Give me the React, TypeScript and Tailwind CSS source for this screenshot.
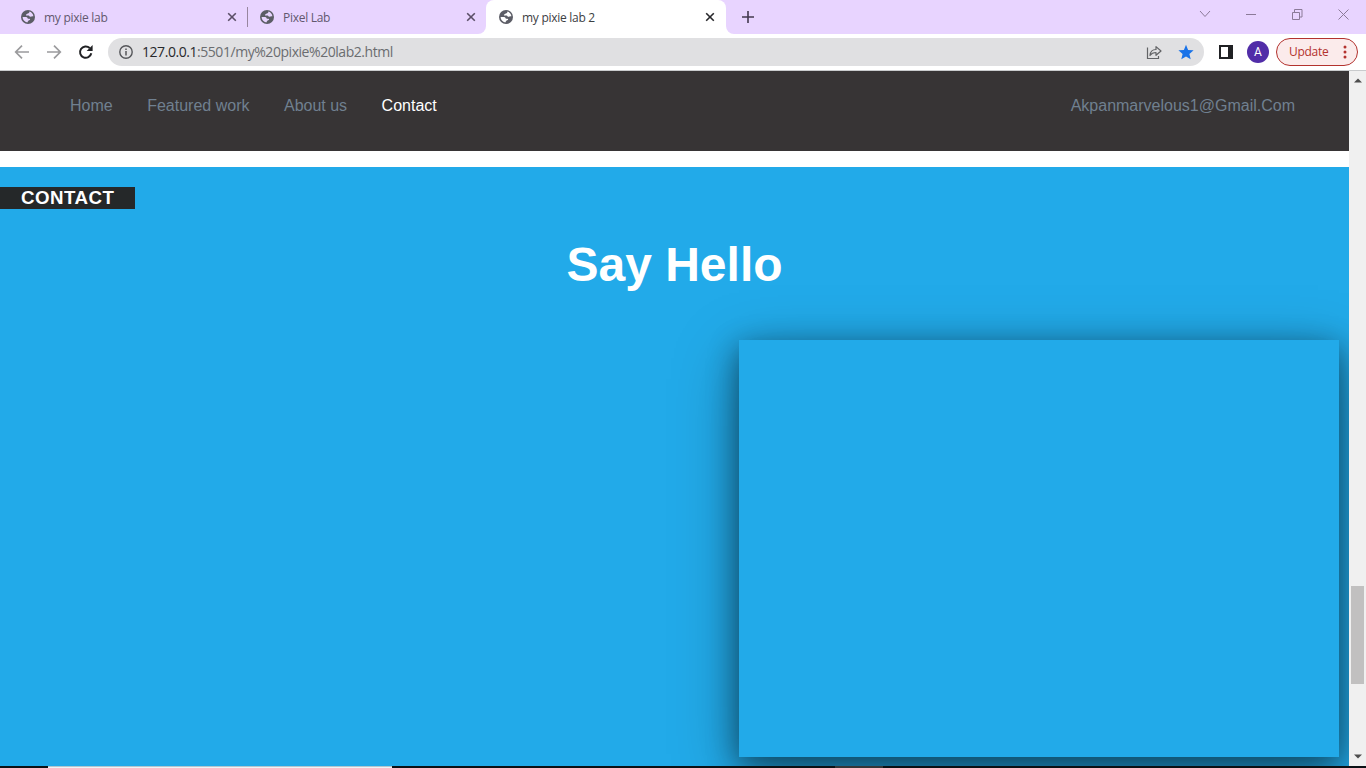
import React from "react";

const uiFont = "font-['Open_Sans','Noto_Sans',sans-serif]";

function Globe({ className = "" }: { className?: string }) {
  return (
    <svg viewBox="0 0 14 14" className={`h-[14px] w-[14px] shrink-0 ${className}`}>
      <circle cx="7" cy="7" r="7" fill="#5c5d66" />
      <path
        d="M8.300 1.600C8.600 2.800 7.900 3.400 6.800 3.400 5.900 3.400 5.900 4.300 5.200 4.500 4.700 4.700 4.900 5.600 5.600 5.600H7.700C8.400 5.600 8.300 6.600 9.100 6.700 10.300 6.800 11 6.300 12.400 6.300 12.100 3.900 10.500 2.100 8.300 1.600z"
        className="fill-current"
      />
      <path
        d="M1.600 7H4.300C5.800 7 6.800 7.700 6.800 8.700H8.400C9.500 8.700 9.300 10.200 8.100 10.300 7.200 10.400 7.300 11.200 6.300 12.400 3.600 12 1.600 9.800 1.600 7z"
        className="fill-current"
      />
    </svg>
  );
}

function Cross({ color }: { color: string }) {
  return (
    <svg viewBox="0 0 10 10" className="h-[10px] w-[10px] shrink-0" stroke={color} strokeWidth="1.600">
      <path d="M1.200 1.200l7.600 7.600M8.800 1.200L1.200 8.800" />
    </svg>
  );
}

function Tab({ title, active = false }: { title: string; active?: boolean }) {
  return (
    <div className={`flex h-[34px] items-center pl-[13px] ${active ? "w-[240px] rounded-t-lg bg-white pr-[11px] text-[#3c4043]" : "w-[239px] pr-[10px] text-[#62586e]"}`}>
      <Globe className={active ? "text-white" : "text-[#e8d4ff]"} />
      <span className="ml-[9px] flex-1 whitespace-nowrap pt-px text-[12px] leading-[16px] tracking-[-0.280px]">{title}</span>
      <Cross color={active ? "#27272b" : "#5a4e66"} />
    </div>
  );
}

function TabStrip() {
  return (
    <div className="flex h-[34px] bg-[#e8d4ff]">
      <div className="flex w-[247px] pl-[8px]">
        <Tab title="my pixie lab" />
      </div>
      <div className="flex h-[34px] w-[239px] items-center bg-white">
        <div className="flex h-[34px] w-[239px] items-center rounded-br-lg bg-[#e8d4ff]">
          <div className="h-[20px] w-px shrink-0 bg-[#98869f]" />
          <div className="-ml-px">
            <Tab title="Pixel Lab" />
          </div>
        </div>
      </div>
      <div className="w-[240px] bg-[#e8d4ff]">
        <Tab title="my pixie lab 2" active />
      </div>
      <div className="flex-1 bg-white">
        <div className="flex h-[34px] items-center justify-between rounded-bl-lg bg-[#e8d4ff] pl-[16px] pr-[17px]">
          <svg viewBox="0 0 12 12" className="h-[12px] w-[12px]" stroke="#43384f" strokeWidth="1.600">
            <path d="M6 0v12M0 6h12" />
          </svg>
          <svg viewBox="0 0 150 12" className="-mt-[6px] h-[12px] w-[150px]" fill="none" stroke="#8b7a98" strokeWidth="1">
            <path d="M1 3l5 5.500L11 3M47 6.500h10M93.500 4.500h7v7h-7zM95.500 4.500v-3h7.500v7.500h-2.500M139.500 1.500l10 10M149.500 1.500l-10 10" />
          </svg>
        </div>
      </div>
    </div>
  );
}

function Toolbar() {
  return (
    <div className="flex h-[37px] items-center border-b border-[#c9cbcd] bg-white pl-[14px] pr-[8px]">
      <svg viewBox="0 0 80 16" className="h-[16px] w-[80px] shrink-0" fill="none" strokeWidth="1.700">
        <g stroke="#9b9b9d">
          <path d="M15 8H2M8 1.700L1.700 8 8 14.300" />
          <path d="M33 8h13M40 1.700L46.300 8 40 14.300" />
        </g>
        <path d="M77.300 9.300A5.700 5.700 0 1 1 75.700 4" stroke="#202124" strokeWidth="2" />
        <path d="M78.600 1v6h-6z" fill="#202124" />
      </svg>
      <div className="ml-[14px] flex h-[28px] w-[1096px] shrink-0 items-center rounded-full bg-[#e0e0e2] pl-[11px] pr-[10px]">
        <svg viewBox="0 0 14 14" className="h-[14px] w-[14px]" fill="none" stroke="#55565a">
          <circle cx="7" cy="7" r="6.200" strokeWidth="1.400" />
          <path d="M7 6v4.500M7 3.400v1.600" strokeWidth="1.500" />
        </svg>
        <span className="ml-[9px] flex-1 whitespace-nowrap text-[14px] leading-[20px] tracking-[-0.450px] text-[#6b6d70]">
          <span className="text-[#27282b]">127.0.0.1</span>:5501/my%20pixie%20lab2.html
        </span>
        <svg viewBox="0 0 16 16" className="h-[16px] w-[16px]" fill="none" stroke="#626366" strokeWidth="1.200">
          <path d="M1.500 3.500v11h11V12" />
          <path d="M4 11.500c.3-4 2.500-6 6-6V2.600L15 7l-5 4.300V8.500c-3 0-4.500.8-6 3z" strokeLinejoin="round" />
        </svg>
        <svg viewBox="0 0 16 16" className="ml-[16px] h-[16px] w-[16px]">
          <path d="M8 .8l2.100 5.100 5.500.4-4.200 3.600 1.300 5.400L8 12.400l-4.700 2.900 1.300-5.400L.4 6.300l5.500-.4z" fill="#1a73e8" />
        </svg>
      </div>
      <svg viewBox="0 0 14 14" className="ml-[15px] h-[14px] w-[14px] shrink-0">
        <path d="M0 0h14v14H0zM2 2v10h7V2z" fill="#202124" fillRule="evenodd" />
      </svg>
      <div className="ml-[14px] flex h-[22px] w-[22px] shrink-0 items-center justify-center rounded-full bg-[#512da8] font-['Roboto',sans-serif] text-[12px] text-white">A</div>
      <div className="ml-[7px] flex h-[28px] w-[82px] shrink-0 items-center rounded-full border border-[#b3322e] bg-[#fbebeb] pl-[12px] pr-[10px] text-[#b3322e]">
        <span className="flex-1 text-[12px] leading-[16px] tracking-[-0.280px]">Update</span>
        <svg viewBox="0 0 4 14" className="h-[14px] w-[4px]" fill="#b3322e">
          <circle cx="2" cy="2" r="1.500" />
          <circle cx="2" cy="7" r="1.500" />
          <circle cx="2" cy="12" r="1.500" />
        </svg>
      </div>
    </div>
  );
}

function Scrollbar() {
  return (
    <div className="flex w-[17px] flex-col items-center bg-[#f0f0f0]">
      <svg viewBox="0 0 8 5" className="mt-[7px] h-[5px] w-[8px]">
        <path d="M0 4.500L4 .5l4 4z" fill="#4d4d4d" />
      </svg>
      <div className="mt-[503px] h-[98px] w-[13px] bg-[#c1c0c0]" />
      <svg viewBox="0 0 8 5" className="mt-[70px] h-[5px] w-[8px]">
        <path d="M0 .5h8l-4 4z" fill="#4d4d4d" />
      </svg>
    </div>
  );
}

export default function App() {
  return (
    <div className="flex h-[768px] w-[1366px] flex-col overflow-hidden bg-white">
      <header className={uiFont}>
        <TabStrip />
        <Toolbar />
      </header>
      <div className="flex h-[695px] shrink-0">
        <main className="flex w-[1349px] flex-col overflow-hidden font-['Liberation_Sans',Arial,sans-serif]">
          <nav className="flex h-[80px] shrink-0 justify-between bg-[#373435] pl-[70px] pr-[54px] pt-[26px] text-[16px] leading-[18px] text-[#708090]">
            <div className="flex gap-[34.500px]">
              <a>Home</a>
              <a>Featured work</a>
              <a>About us</a>
              <a className="text-white">Contact</a>
            </div>
            <a>Akpanmarvelous1@Gmail.Com</a>
          </nav>
          <section className="mt-[16px] flex h-[599px] shrink-0 flex-col bg-[#22aae9] pt-[20px] text-white">
            <h3 className="h-[22px] w-[135px] bg-[#252829] pl-[21px] text-[18.720px] font-bold leading-[22px] tracking-[0.500px]">CONTACT</h3>
            <h1 className="mt-[28px] text-center text-[48px] font-bold leading-[56px]">Say Hello</h1>
            <div className="mr-[10px] mt-[47px] h-[417px] w-[600px] shrink-0 self-end bg-[#22aae9] shadow-[0_8px_28px_rgba(0,0,0,0.45),0_18px_60px_rgba(0,0,0,0.35)]" />
          </section>
        </main>
        <Scrollbar />
      </div>
      <footer className="flex h-[2px] bg-[#0b1115]">
        <div className="ml-[48px] h-[2px] w-[344px] border-t border-[#b3c6d0] bg-[#eef3f5]" />
        <div className="ml-[443px] h-[2px] w-[48px] bg-[#353638]" />
      </footer>
    </div>
  );
}
